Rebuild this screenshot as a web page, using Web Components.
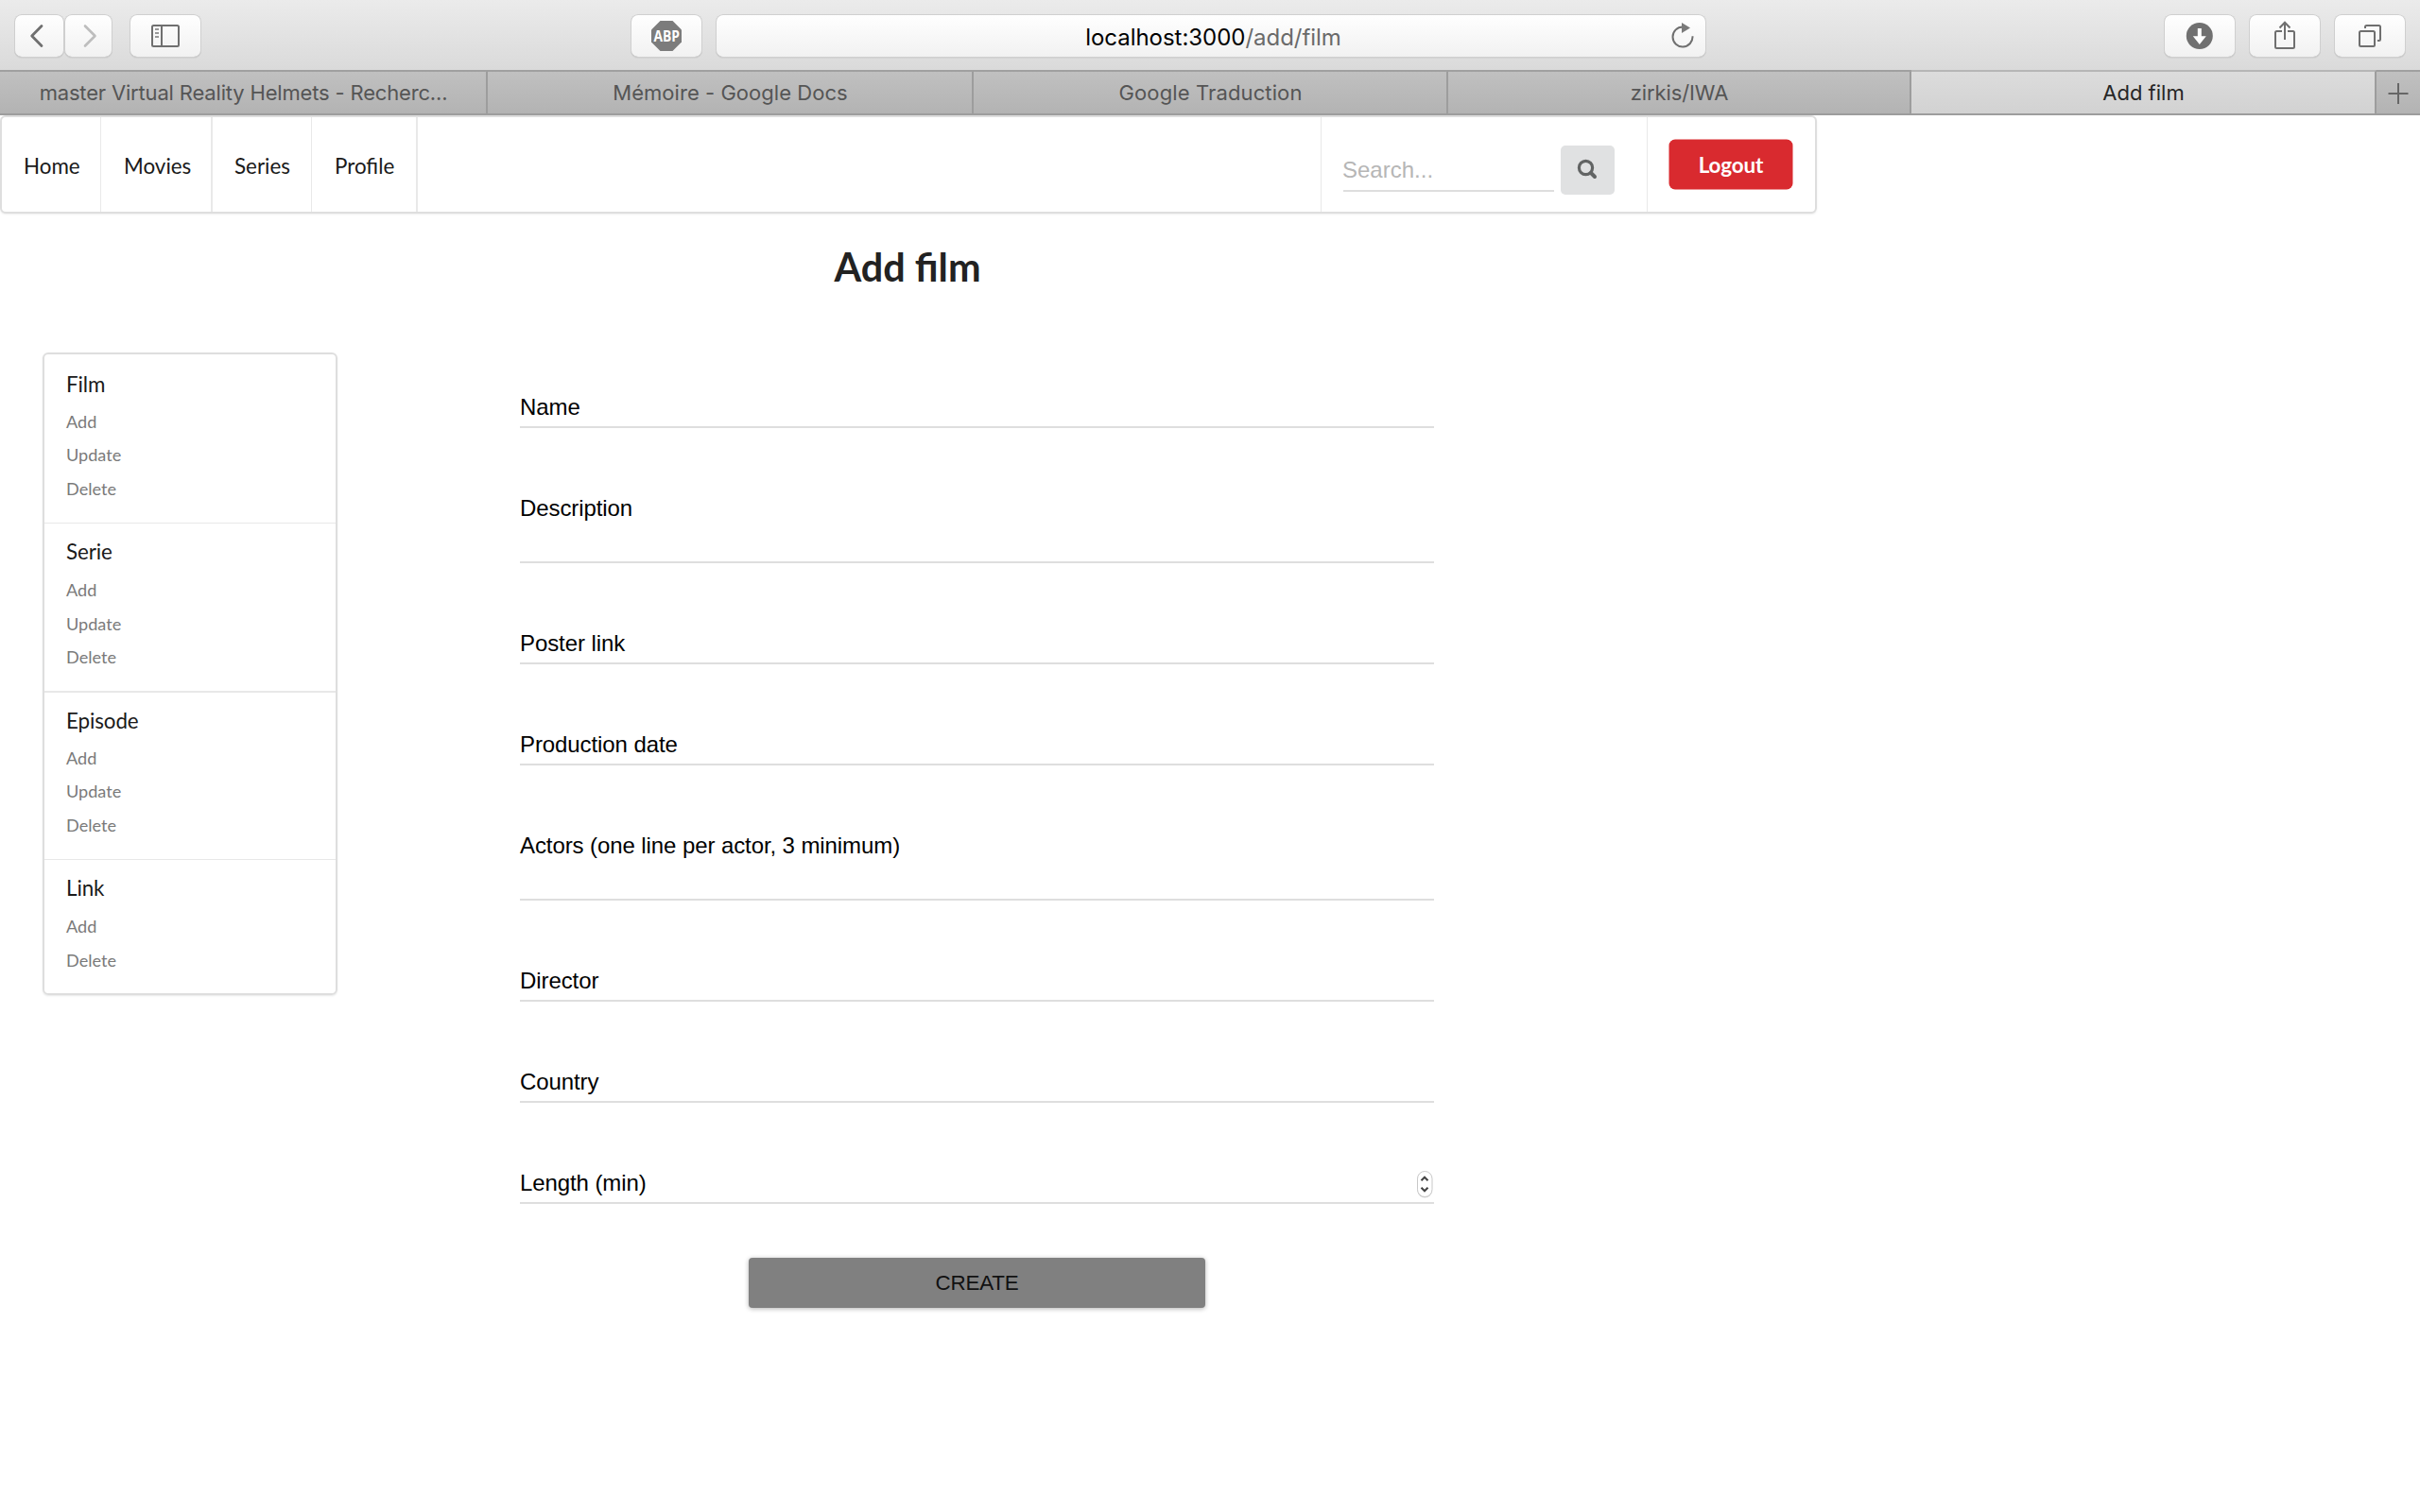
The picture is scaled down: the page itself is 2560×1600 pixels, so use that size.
<!DOCTYPE html>
<html lang="en">
<head>
<meta charset="utf-8">
<title>Add film</title>
<style>
html,body{margin:0;background:#fff;height:1600px;overflow:hidden;font-family:Lato,sans-serif}
</style>
</head>
<body>
<film-app></film-app>
<script>
const define=(name,html,setup)=>{
  const t=document.createElement('template');t.innerHTML=html;
  customElements.define(name,class extends HTMLElement{
    constructor(){super();this.attachShadow({mode:'open'}).append(t.content.cloneNode(true));}
    connectedCallback(){if(setup)setup(this,this.shadowRoot);}
  });
};

define('tool-button',`<style>
:host{display:block;height:46px;border-radius:8px;background:linear-gradient(#fff,#f1f1f1);
box-shadow:inset 0 0 0 1px #cfcfcf,inset 0 -1px 0 #b0b0b0,0 1px 0 rgba(0,0,0,.04);box-sizing:border-box;flex:none}
::slotted(svg){display:block}
</style><slot></slot>`);

define('browser-toolbar',`<style>
:host{display:flex;height:74px;box-sizing:border-box;padding:15px 15px 0;background:linear-gradient(#ebebeb,#dadada);align-items:flex-start}
.url{width:1048px;margin-left:14px;font:24px/46px Inter,sans-serif;color:#000}
.in{display:flex;height:46px}
.txt{width:1007px;text-align:center;white-space:pre;box-sizing:border-box;padding-left:46px;padding-top:2px;letter-spacing:-.03px}
.txt i{font-style:normal;color:#6a6a6a}
svg{fill:none;stroke:#6f6f6f;stroke-width:2}
</style>
<tool-button style="width:53px"><svg width="53" height="46" viewBox="15 15 53 46"><path d="M44 27.5L33.7 38L44 48.5" stroke-width="2.8" stroke-linecap="round" stroke-linejoin="round"/></svg></tool-button>
<tool-button style="width:51px"><svg width="51" height="46" viewBox="68 15 51 46"><path d="M90 27.5L100.5 38L90 48.5" stroke="#bdbdbd" stroke-width="2.6" stroke-linecap="round" stroke-linejoin="round"/></svg></tool-button>
<tool-button style="width:76px;margin-left:18px"><svg width="76" height="46" viewBox="137 15 76 46"><rect x="161" y="27" width="28" height="22" rx="1.5"/><path d="M171 27V49"/><path d="M164 31h4M164 35h4M164 39h4" stroke="#999" stroke-width="1.8"/></svg></tool-button>
<tool-button style="width:76px;margin-left:454px"><svg width="76" height="46" viewBox="667 15 76 46"><path d="M698.5 22h13L721 31.5v13L711.500 54h-13L689 44.500v-13z" fill="#7c7c7c" stroke="none"/><text x="691.5" y="43.800" font-family="Open Sans" font-weight="700" font-size="16.400" textLength="27.500" lengthAdjust="spacingAndGlyphs" fill="#fff" stroke="none">ABP</text></svg></tool-button>
<tool-button class="url"><div class="in"><div class="txt">localhost:3000<i>/add/film</i></div><svg width="41" height="46" viewBox="1764 15 41 46"><path d="M1790.500 38.300A10.500 10.500 0 1 1 1780 28.500"/><path d="M1779 24L1788 29.500L1779 35z" fill="#7a7a7a" stroke="none"/></svg></div></tool-button>
<tool-button style="width:76px;margin-left:484px"><svg width="76" height="46" viewBox="2289 15 76 46"><circle cx="2326.800" cy="38" r="14" fill="#707070" stroke="none"/><path d="M2324.800 30h4v8.200h5L2326.800 47l-7-8.800h5z" fill="#fff" stroke="none"/></svg></tool-button>
<tool-button style="width:76px;margin-left:14px"><svg width="76" height="46" viewBox="2379 15 76 46"><path d="M2414 33h-5.500q-1.500 0-1.500 1.500V49.500q0 1.500 1.500 1.500h17q1.500 0 1.500-1.500V34.500q0-1.500-1.500-1.500H2420M2417 24V42M2411.500 29.500L2417 23.800L2422.500 29.500"/></svg></tool-button>
<tool-button style="width:76px;margin-left:14px"><svg width="76" height="46" viewBox="2469 15 76 46"><rect x="2496" y="33" width="16" height="16" rx="1.500"/><path d="M2502 30V28.500q0-1.500 1.500-1.500H2516.500q1.500 0 1.500 1.500V41.500q0 1.500-1.500 1.500H2515"/></svg></tool-button>`);

define('tab-item',`<style>
:host{display:block;box-sizing:border-box;height:48px;border-top:2px solid #a0a0a0;border-bottom:2px solid #9d9d9d;border-right:2px solid #9d9d9d;background:linear-gradient(#c0c0c0,#b3b3b3);
font:22px/44px Inter,sans-serif;color:#555;text-align:center;white-space:pre;flex:none;padding-left:1px}
:host([active]){background:linear-gradient(#dcdcdc,#d2d2d2);color:#262626;border-top-color:#b6b6b6}
:host([last]){border-right:0;padding-left:0}
</style><slot></slot>`);

define('browser-tabs',`<style>:host{display:flex;height:48px}svg{display:block}</style>
<tab-item style="width:516px;letter-spacing:-.17px">master Virtual Reality Helmets - Recherc...</tab-item>
<tab-item style="width:514px;letter-spacing:.04px">Mémoire - Google Docs</tab-item>
<tab-item style="width:502px;letter-spacing:.12px">Google Traduction</tab-item>
<tab-item style="width:490px;letter-spacing:-.1px">zirkis/IWA</tab-item>
<tab-item active style="width:492px">Add film</tab-item>
<tab-item last style="width:46px"><svg width="46" height="44" viewBox="2514 76 46 44"><path d="M2526.500 99H2547.500M2537 88V110" stroke="#666" stroke-width="2"/></svg></tab-item>`);

define('nav-item',`<style>:host{display:block;box-sizing:border-box;height:100px;padding-left:23px;font:22.4px/104px Lato,sans-serif;color:#1a1a1a;border-right:1px solid #e9e9e9;flex:none}
:host([thick]){border-right-width:2px}</style><slot></slot>`);

define('site-nav',`<style>
:host{display:flex;box-sizing:border-box;width:1922px;height:104px;border:2px solid #dedede;border-radius:6px;box-shadow:0 1px 2px rgba(34,36,38,.08);background:#fff}
.search{margin-left:auto;width:346px;box-sizing:border-box;border-left:1px solid #e9e9e9;border-right:1px solid #e9e9e9;display:flex;padding:30px 0 0 23px}
.field{width:223px;height:49px;box-sizing:border-box;border-bottom:2px solid #dedede;font:24px/52px "Liberation Sans",sans-serif;color:#b6b6b6;text-indent:-1px}
.go{width:57px;height:52px;border-radius:5px;background:#e0e1e2;margin-left:7px}
.out{width:177px;padding:24px 0 0 23px;box-sizing:border-box}
.out b{display:block;width:130px;height:52px;border-radius:6px;background:#d92a2f;box-shadow:0 0 0 .5px #d92a2f;color:#fff;font:700 22.400px/53px Lato,sans-serif;text-align:center;letter-spacing:-.1px}
svg{display:block}
</style>
<nav-item style="width:105px">Home</nav-item><nav-item thick style="width:118px;padding-left:24px">Movies</nav-item><nav-item style="width:105px">Series</nav-item><nav-item thick style="width:112px;padding-left:24px">Profile</nav-item>
<div class="search"><div class="field">Search...</div><div class="go"><svg width="57" height="52" viewBox="1651 154 57 52" fill="none" stroke="#626464"><circle cx="1677.500" cy="177.500" r="7.100" stroke-width="3.200"/><path d="M1683 183L1687 187" stroke-width="4" stroke-linecap="round"/></svg></div></div>
<div class="out"><b>Logout</b></div>`);

define('menu-group',`<style>
:host{display:block;box-sizing:border-box;padding-left:23px;border-bottom:1px solid #e8e8e8;font-family:Lato,sans-serif}
:host([last]){border-bottom:0}
.h{font-size:22.400px;line-height:28px;color:#1a1a1a;letter-spacing:-.1px}
ul{margin:var(--gap,8px) 0 0;padding:0;list-style:none}
li{font-size:18.100px;line-height:35.700px;color:#7a7a7a}
</style><div class="h"></div><ul></ul>`,(el,r)=>{
  r.querySelector('.h').textContent=el.getAttribute('label');
  r.querySelector('ul').innerHTML=el.getAttribute('items').split(',').map(x=>`<li>${x}</li>`).join('');
});

define('side-menu',`<style>
:host{display:block;box-sizing:border-box;width:312px;height:680px;border:2px solid #dedede;border-radius:6px;box-shadow:0 1px 2px rgba(34,36,38,.1);flex:none}
</style>
<menu-group style="height:179px;padding-top:18px;--gap:7.500px" label="Film" items="Add,Update,Delete"></menu-group>
<menu-group style="height:179px;padding-top:16px;border-bottom-width:2px;--gap:9px" label="Serie" items="Add,Update,Delete"></menu-group>
<menu-group style="height:177px;padding-top:16px;--gap:7.500px" label="Episode" items="Add,Update,Delete"></menu-group>
<menu-group last style="padding-top:16px;--gap:9px" label="Link" items="Add,Delete"></menu-group>`);

define('form-field',`<style>
:host{display:flex;justify-content:space-between;box-sizing:border-box;height:107px;padding-top:71px;border-bottom:2px solid #dedede;font:24px/28px "Liberation Sans",sans-serif;letter-spacing:-.09px;color:#000}
:host([tall]){height:143px}
</style><span><slot></slot></span><slot name="end"></slot>`);

define('number-stepper',`<style>:host{display:block;width:20px;height:30px}svg{display:block;overflow:visible}</style>
<svg width="20" height="30" viewBox="1497 1238 20 30" fill="none"><rect x="1499.500" y="1240.500" width="15.500" height="27" rx="7.700" fill="#000" opacity=".16"/><rect x="1499.500" y="1239.500" width="15.500" height="27" rx="7.700" fill="#fff" stroke="#c8c8c8"/><path d="M1503.500 1249.200L1507 1245.800L1510.500 1249.200M1503.500 1256.800L1507 1260.200L1510.500 1256.800" stroke="#444" stroke-width="2.100"/></svg>`);

define('film-form',`<style>
:host{display:flex;flex-direction:column;width:967px}
button{all:unset;align-self:center;width:483px;height:53px;margin-top:57px;border-radius:4px;background:#808080;color:#111;text-align:center;font:22.400px/53px "Liberation Sans",sans-serif;letter-spacing:-.2px;box-shadow:0 1px 5px rgba(0,0,0,.3)}
</style>
<form-field>Name</form-field><form-field tall>Description</form-field><form-field>Poster link</form-field><form-field>Production date</form-field><form-field tall>Actors (one line per actor, 3 minimum)</form-field><form-field>Director</form-field><form-field>Country</form-field><form-field>Length (min)<number-stepper slot="end"></number-stepper></form-field>
<button>CREATE</button>`);

define('film-app',`<style>
:host{display:block}
h1{margin:0;width:1920px;text-align:center;font:700 41.400px/56px Lato,sans-serif;color:#222;padding-top:28px;height:120px;box-sizing:border-box}
main{display:flex;padding-left:45px;align-items:flex-start}
side-menu{margin-top:27px}
film-form{margin-left:193px}
</style>
<browser-toolbar></browser-toolbar><browser-tabs></browser-tabs><site-nav></site-nav>
<h1>Add film</h1>
<main><side-menu></side-menu><film-form></film-form></main>`);
</script>
</body>
</html>
